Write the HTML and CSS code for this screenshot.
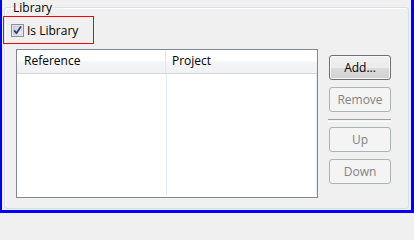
FILE: index.html
```html
<!DOCTYPE html>
<html>
<head>
<meta charset="utf-8">
<link rel="stylesheet" href="styles.css">
</head>
<body>
<div class="frame">
  <fieldset class="group">
    <legend class="group-title">Library</legend>
    <label class="check-row">
      <span class="checkbox">
        <svg width="13" height="13" viewBox="0 0 13 13">
          <defs>
            <linearGradient id="cbg" x1="0" y1="0" x2="1" y2="1">
              <stop offset="0" stop-color="#c9cdd4"/>
              <stop offset="1" stop-color="#f3f4f6"/>
            </linearGradient>
          </defs>
          <rect x="0.5" y="0.5" width="12" height="12" fill="#f4f4f4" stroke="#8e8f8f"/>
          <rect x="2" y="2" width="9" height="9" fill="url(#cbg)" stroke="#b6bcc6" stroke-width="0.6"/>
          <path d="M3.2 6.4 L5.4 9.2 L10 2.6" fill="none" stroke="#2b3f86" stroke-width="1.8" stroke-linejoin="round"/>
        </svg>
      </span>
      <span class="check-label">Is Library</span>
    </label>
    <div class="content">
      <div class="list">
        <div class="list-head">
          <div class="head-col">Reference</div>
          <div class="head-col">Project</div>
        </div>
        <div class="list-body">
          <div class="body-col"></div>
          <div class="body-col"></div>
        </div>
      </div>
      <div class="buttons">
        <button class="btn btn-default">Add...</button>
        <button class="btn" disabled>Remove</button>
        <div class="sep"></div>
        <button class="btn" disabled>Up</button>
        <button class="btn" disabled>Down</button>
      </div>
    </div>
  </fieldset>
</div>
</body>
</html>
```
FILE: styles.css
```css
html, body {
  margin: 0;
  padding: 0;
  background: #f0f0f0;
}
body {
  font-family: "Open Sans", "Noto Sans", sans-serif;
  font-size: 12px;
  color: #000;
}
.frame {
  width: 414px;
  height: 213px;
  box-sizing: border-box;
  border-left: 2px solid #0000ff;
  border-right: 3px solid #0000ff;
  border-bottom: 3px solid #0000ff;
  background: #f0f0f0;
  padding: 0 2px 0 2px;
}
.group {
  margin: 0;
  padding: 1px 0 0 0;
  height: 209px;
  box-sizing: border-box;
  border: 1px solid #d5dfe5;
  border-radius: 3px;
  box-shadow: inset 1px 1px 0 #ffffff;
  min-width: 0;
}
.group-title {
  margin-left: 6px;
  padding: 0 2px;
  line-height: 15px;
  height: 15px;
  color: #000;
}
.check-row {
  display: flex;
  align-items: center;
  width: 82px;
  height: 26px;
  margin-left: -2px;
  border: 1px solid #ff0000;
  padding-left: 7px;
  box-sizing: content-box;
  gap: 3px;
}
.checkbox {
  width: 13px;
  height: 13px;
  display: block;
  margin-top: 1px;
}
.checkbox svg {
  display: block;
}
.check-label {
  line-height: 15px;
  margin-top: 1px;
  white-space: nowrap;
}
.content {
  display: flex;
  margin-top: 5px;
  margin-left: 11px;
  gap: 11px;
}
.list {
  width: 300px;
  height: 147px;
  border: 1px solid #828790;
  background: #ffffff;
  display: flex;
  flex-direction: column;
}
.list-head {
  display: flex;
  height: 23px;
  border-bottom: 1px solid #d5d5d5;
  background: linear-gradient(#ffffff 0%, #ffffff 45%, #f3f4f6 55%, #f1f2f4 100%);
}
.head-col {
  width: 149px;
  padding-left: 7px;
  box-sizing: border-box;
  line-height: 22px;
  border-right: 1px solid #e5e5e5;
}
.head-col + .head-col {
  width: 150px;
  padding-left: 6px;
  border-right: none;
}
.list-body {
  display: flex;
  flex: 1;
  padding-bottom: 2px;
}
.body-col {
  width: 150px;
  box-sizing: border-box;
  border-right: 1px solid #e6edf7;
}
.buttons {
  display: flex;
  flex-direction: column;
  width: 62px;
  margin-top: 6px;
}
.btn {
  width: 62px;
  height: 25px;
  padding: 0;
  margin: 0 0 7px 0;
  font-family: "Open Sans", "Noto Sans", sans-serif;
  font-size: 12px;
  line-height: 15px;
  border-radius: 3px;
  border: 1px solid #adb2b5;
  background: #f4f4f4;
  color: #838383;
  box-sizing: border-box;
}
.btn-default {
  border-color: #707070;
  color: #000;
  background: linear-gradient(#f2f2f2 0%, #ebebeb 50%, #dddddd 51%, #cfcfcf 100%);
  box-shadow: inset 0 0 0 1px #f8f8f8;
}
.sep {
  width: 63px;
  margin-left: -1px;
  height: 1px;
  border-top: 1px solid #a0a0a0;
  border-bottom: 1px solid #ffffff;
  margin-bottom: 5px;
}
```
